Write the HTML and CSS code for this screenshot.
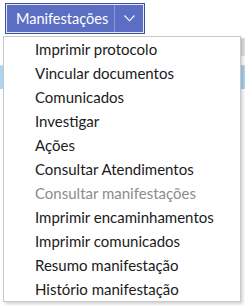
FILE: index.html
```html
<!DOCTYPE html>
<html lang="pt-BR">
<head>
  <meta charset="UTF-8" />
  <title>Manifestações</title>
  <link rel="stylesheet" href="styles.css">
</head>
<body>
  <div class="page">
    <div class="toolbar">
      <div class="split-btn">
        <button class="split-main">Manifestações</button>
        <button class="split-toggle">
          <svg width="11" height="7" viewBox="0 0 11 7"><polyline points="0.5,0.5 5.5,5.8 10.5,0.5" fill="none" stroke="#fff" stroke-width="1.1"/></svg>
        </button>
      </div>
    </div>
    <div class="side-tool"></div>
    <div class="grid-head"></div>

    <ul class="menu">
      <li class="menu-item">Imprimir protocolo</li>
      <li class="menu-item">Vincular documentos</li>
      <li class="menu-item">Comunicados</li>
      <li class="menu-item">Investigar</li>
      <li class="menu-item">Ações</li>
      <li class="menu-item">Consultar Atendimentos</li>
      <li class="menu-item disabled">Consultar manifestações</li>
      <li class="menu-item">Imprimir encaminhamentos</li>
      <li class="menu-item">Imprimir comunicados</li>
      <li class="menu-item">Resumo manifestação</li>
      <li class="menu-item">Histório manifestação</li>
    </ul>
  </div>
</body>
</html>
```

FILE: styles.css
```css
:root {
  --btn-fill: #5b6ec4;
  --btn-border: #3d4f9f;
  --btn-sep: #8896d6;
  --text: #1b1b1b;
  --text-disabled: #8c8c8c;
  --menu-border: #c9c9c9;
  --grid-blue: #a9d6f2;
  --font: Lato, "Open Sans", sans-serif;
}
html, body {
  margin: 0;
  background: #fff;
  font-family: var(--font);
}
.page {
  position: relative;
  width: 245px;
  height: 306px;
  overflow: hidden;
}
.toolbar {
  padding: 3px 0 0 5px;
  height: 32px;
}
.split-btn {
  display: inline-flex;
  height: 31px;
  border: 1px solid var(--btn-border);
  box-shadow: inset 0 0 0 1px #e8ebf7;
  background: var(--btn-fill);
  box-sizing: border-box;
}
.split-btn button {
  border: none;
  background: transparent;
  color: #fff;
  font-family: var(--font);
  font-size: 14.5px;
  padding: 0;
  margin: 1px 0;
  cursor: pointer;
}
.split-main {
  padding: 0 6px 0 10px !important;
  border-right: 1px solid var(--btn-sep) !important;
}
.split-toggle {
  width: 29px;
  display: flex;
  align-items: center;
  justify-content: center;
}
.side-tool {
  position: absolute;
  right: 0;
  top: 38px;
  width: 4px;
  height: 18px;
  background: #e3e3e3;
}
.grid-head {
  margin-top: 30px;
  height: 23px;
  background: var(--grid-blue);
  border-top: 1px solid #d9d9d9;
}
.menu {
  position: absolute;
  top: 36px;
  left: 3px;
  width: 238px;
  margin: 0;
  padding: 0;
  list-style: none;
  background: #fff;
  border: 1px solid var(--menu-border);
  box-shadow: 2px 2px 3px rgba(0, 0, 0, 0.18);
  box-sizing: border-box;
}
.menu-item {
  height: 24px;
  line-height: 24px;
  padding-left: 31px;
  font-size: 15px;
  color: var(--text);
  white-space: nowrap;
}
.menu-item.disabled {
  color: var(--text-disabled);
}
```
